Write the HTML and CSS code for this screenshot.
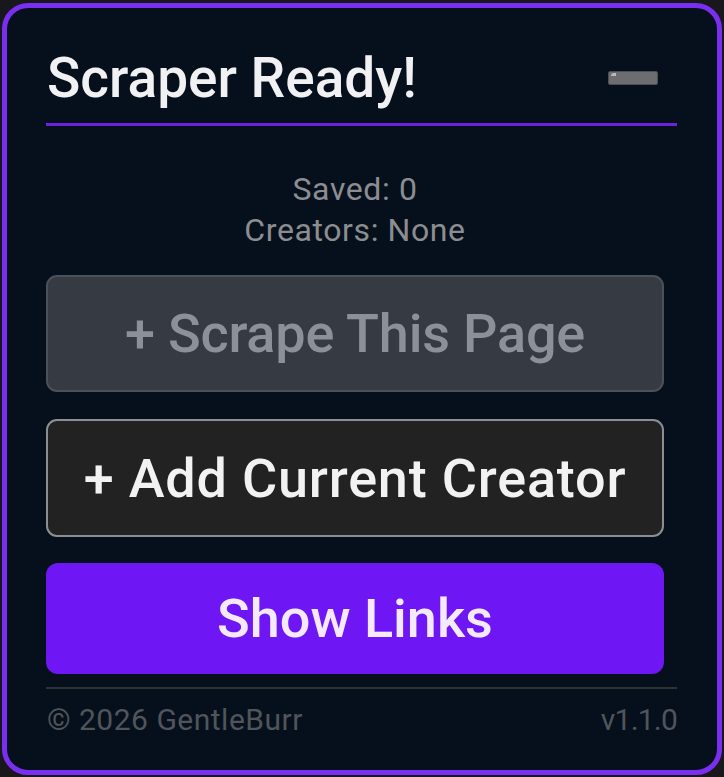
FILE: index.html
```html
<!DOCTYPE html>
<html lang="en">
<head>
<meta charset="utf-8">
<title>Scraper</title>
<link rel="stylesheet" href="styles.css">
</head>
<body>
<div class="panel">
  <div class="header">
    <h1 class="title">Scraper Ready!</h1>
    <button class="minimize" aria-label="Minimize"><span class="minimize-shine"></span></button>
  </div>
  <div class="stats">
    <div class="stat-line">Saved: 0</div>
    <div class="stat-line">Creators: None</div>
  </div>
  <button class="btn btn-scrape">+ Scrape This Page</button>
  <button class="btn btn-add">+ Add Current Creator</button>
  <button class="btn btn-show">Show Links</button>
  <div class="footer">
    <span class="copyright">© 2026 GentleBurr</span>
    <span class="version">v1.1.0</span>
  </div>
</div>
</body>
</html>
```

FILE: styles.css
```css
* { box-sizing: border-box; }
html, body {
  margin: 0;
  padding: 0;
  background: #17171c;
  font-family: Roboto, "Liberation Sans", sans-serif;
}
.panel {
  width: 720px;
  height: 772px;
  margin: 3px 0 0 2px;
  border: 5px solid #7a2ff0;
  border-radius: 26px;
  background: #06101c;
  padding: 37px 40px 0 39px;
  display: flex;
  flex-direction: column;
}
.header {
  display: flex;
  align-items: center;
  justify-content: space-between;
  padding-bottom: 12px;
  border-bottom: 3px solid #6a22e0;
}
.title {
  margin: 0;
  font-size: 55px;
  font-weight: 500;
  line-height: 66px;
  color: #f1f1f3;
  padding-left: 1px;
}
.minimize {
  position: relative;
  width: 50px;
  height: 14px;
  margin-right: 19px;
  padding: 0;
  background: #6d6d6f;
  border: 1px solid #4e4e52;
  border-radius: 2px;
}
.minimize-shine {
  position: absolute;
  left: 2px;
  top: 1px;
  width: 5px;
  height: 3px;
  background: #b9b9bc;
  border-radius: 3px 0 0 0;
}
.stats {
  margin-top: 43px;
  margin-right: 13px;
  text-align: center;
  color: #8c8d90;
  font-size: 32px;
  letter-spacing: 0.6px;
  line-height: 41px;
}
.btn {
  display: flex;
  align-items: center;
  justify-content: center;
  width: 618px;
  margin: 0;
  padding: 0;
  font-family: Roboto, "Liberation Sans", sans-serif;
  font-size: 54px;
  font-weight: 500;
  border-radius: 11px;
}
.btn-scrape {
  margin-top: 24px;
  height: 117px;
  background: #363a43;
  border: 2px solid #4c5058;
  color: #8b9099;
  letter-spacing: -0.2px;
}
.btn-add {
  margin-top: 27px;
  height: 118px;
  background: #222222;
  border: 2px solid #8d8e90;
  color: #f2f2f2;
  letter-spacing: 0.8px;
}
.btn-show {
  margin-top: 26px;
  height: 111px;
  background: #6f16f4;
  border: none;
  border-radius: 12px;
  color: #f4eafe;
}
.footer {
  margin-top: 13px;
  border-top: 2px solid #2f3338;
  padding-top: 13px;
  display: flex;
  justify-content: space-between;
  font-size: 30px;
  line-height: 36px;
  color: #50545b;
}
.copyright { padding-left: 1px; letter-spacing: 0.5px; }
.version { letter-spacing: -0.8px; }
```
